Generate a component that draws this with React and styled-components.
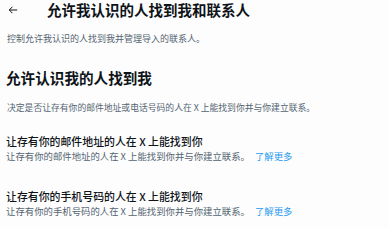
import React from "react";
import styled, { createGlobalStyle } from "styled-components";

const GlobalStyle = createGlobalStyle`
  html, body {
    margin: 0;
    padding: 0;
    background: #fdfdfd;
  }
  body {
    font-family: "Noto Sans CJK SC", "Noto Sans", sans-serif;
    color: #0f1419;
  }
`;

const Page = styled.div`
  width: 389px;
  height: 229px;
  overflow: hidden;
  background: #fdfdfd;
`;

const Header = styled.div`
  display: flex;
  align-items: center;
  height: 19px;
  padding-left: 8px;
`;

const BackButton = styled.div`
  width: 39px;
  display: flex;
  align-items: center;
  color: #0f1419;
`;

const HeaderTitle = styled.h1`
  margin: 0;
  font-size: 14.5px;
  font-weight: 700;
  line-height: 20px;
`;

const Intro = styled.p`
  margin: 13px 0 0;
  padding: 0 7px;
  font-size: 9px;
  line-height: 14px;
  color: #536471;
`;

const SectionTitle = styled.h2`
  margin: 22px 0 0;
  padding: 0 6px;
  font-size: 14.6px;
  font-weight: 700;
  line-height: 20px;
`;

const SectionDesc = styled.p`
  margin: 13px 0 0;
  padding: 0 7px;
  font-size: 8.8px;
  line-height: 14px;
  color: #536471;
`;

const Option = styled.div`
  display: flex;
  flex-direction: column;
  padding: 0 6px;
  margin-top: ${p => p.$top}px;
`;

const OptionTitle = styled.div`
  font-size: 10.9px;
  font-weight: 500;
  line-height: 15px;
  color: #0f1419;
`;

const OptionDesc = styled.div`
  font-size: 9.4px;
  line-height: 15px;
  color: #536471;
`;

const LearnMore = styled.a`
  color: #1d9bf0;
  text-decoration: none;
  margin-left: 5px;
`;

const ArrowIcon = () => (
  <svg width="10" height="10" viewBox="0 0 24 24" fill="none">
    <path
      d="M21 12H4M10 5l-7 7 7 7"
      stroke="currentColor"
      strokeWidth="2.4"
      strokeLinecap="round"
      strokeLinejoin="round"
    />
  </svg>
);

const options = [
  {
    title: "让存有你的邮件地址的人在 X 上能找到你",
    desc: "让存有你的邮件地址的人在 X 上能找到你并与你建立联系。",
    top: 19,
  },
  {
    title: "让存有你的手机号码的人在 X 上能找到你",
    desc: "让存有你的手机号码的人在 X 上能找到你并与你建立联系。",
    top: 25,
  },
];

export default function App() {
  return (
    <Page>
      <GlobalStyle />
      <Header>
        <BackButton>
          <ArrowIcon />
        </BackButton>
        <HeaderTitle>允许我认识的人找到我和联系人</HeaderTitle>
      </Header>
      <Intro>控制允许我认识的人找到我并管理导入的联系人。</Intro>
      <SectionTitle>允许认识我的人找到我</SectionTitle>
      <SectionDesc>
        决定是否让存有你的邮件地址或电话号码的人在 X 上能找到你并与你建立联系。
      </SectionDesc>
      {options.map(o => (
        <Option key={o.title} $top={o.top}>
          <OptionTitle>{o.title}</OptionTitle>
          <OptionDesc>
            {o.desc}
            <LearnMore href="#">了解更多</LearnMore>
          </OptionDesc>
        </Option>
      ))}
    </Page>
  );
}
